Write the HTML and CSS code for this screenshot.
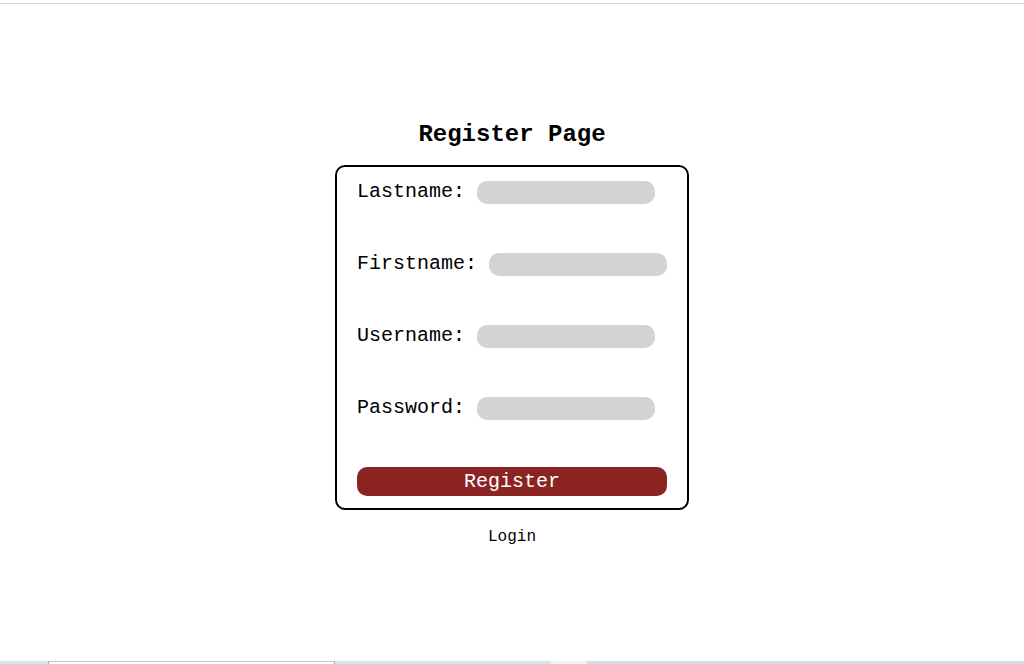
FILE: index.html
```html
<!DOCTYPE html>
<html lang="en">
<head>
<meta charset="utf-8">
<title>Register Page</title>
<link rel="stylesheet" href="styles.css">
</head>
<body>
<div class="topline"></div>
<main class="page">
  <h2 class="title">Register Page</h2>
  <form class="card">
    <div class="row"><label class="label" for="ln">Lastname:</label><input class="field" id="ln" type="text"></div>
    <div class="row"><label class="label" for="fn">Firstname:</label><input class="field" id="fn" type="text"></div>
    <div class="row"><label class="label" for="un">Username:</label><input class="field" id="un" type="text"></div>
    <div class="row"><label class="label" for="pw">Password:</label><input class="field" id="pw" type="password"></div>
    <button class="btn" type="button">Register</button>
  </form>
  <a class="login" href="#">Login</a>
</main>
<div class="taskbar">
  <span class="seg seg-a"></span><span class="seg seg-b"></span><span class="seg seg-c"></span><span class="seg seg-d"></span><span class="seg seg-e"></span>
</div>
</body>
</html>
```
FILE: styles.css
```css
html, body {
  margin: 0;
  padding: 0;
  background: #ffffff;
  font-family: "Liberation Mono", "Courier New", monospace;
  color: #000;
}
body {
  height: 664px;
  overflow: hidden;
  position: relative;
}
.topline {
  height: 3px;
  border-bottom: 1px solid #dadada;
}
.page {
  display: flex;
  flex-direction: column;
  align-items: center;
  padding-top: 117px;
}
.title {
  margin: 0 0 16px;
  font-size: 24px;
  font-weight: bold;
  line-height: 28px;
}
.card {
  width: 310px;
  border: 2px solid #000;
  border-radius: 10px;
  padding: 14px 20px 12px;
  display: flex;
  flex-direction: column;
  gap: 49px;
  margin: 0;
}
.row {
  display: flex;
  align-items: center;
  height: 23px;
}
.label {
  font-size: 20px;
  line-height: 23px;
  margin-right: 12px;
  white-space: nowrap;
  position: relative;
  top: -1px;
}
.field {
  width: 178px;
  height: 23px;
  box-sizing: border-box;
  border: none;
  border-radius: 10px;
  background: #d3d3d3;
  padding: 0 8px;
  font-family: inherit;
  flex: none;
}
.btn {
  margin-top: -2px;
  height: 29px;
  width: 310px;
  border: none;
  border-radius: 10px;
  background: #8b2323;
  color: #fff;
  font-family: "Liberation Mono", "Courier New", monospace;
  font-size: 20px;
  padding: 0;
}
.login {
  margin-top: 18px;
  font-size: 16px;
  line-height: 18px;
  color: #000;
  text-decoration: none;
}
.taskbar {
  position: absolute;
  left: 0;
  right: 0;
  bottom: 0;
  height: 3px;
  display: flex;
}
.seg { display: block; height: 3px; }
.seg-a { width: 48px; background: #cfe6ee; }
.seg-b { width: 287px; background: #ffffff; border-top: 1px solid #c8c8c8; border-left: 1px solid #aaa; border-right: 1px solid #aaa; box-sizing: border-box; }
.seg-c { width: 216px; background: #cfe6ee; }
.seg-d { width: 35px; background: #eef4f8; }
.seg-e { flex: 1; background: #d3e0ea; }
```
